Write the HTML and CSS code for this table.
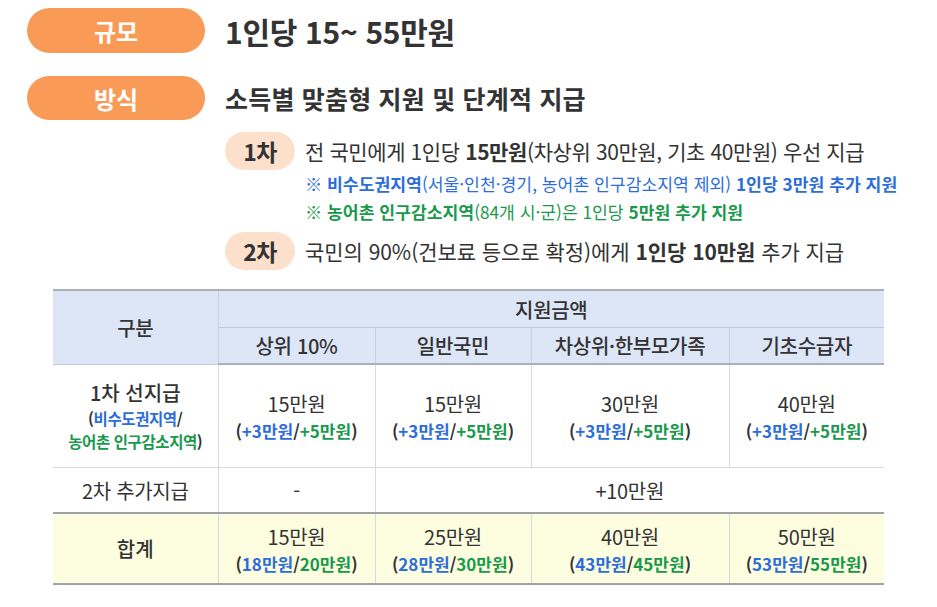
FILE: index.html
```html
<!DOCTYPE html>
<html lang="ko">
<head>
<meta charset="utf-8">
<link rel="stylesheet" href="styles.css">
</head>
<body>
<div class="page">
  <div class="row">
    <div class="pill">규모</div>
    <div class="head1">1인당 15~ 55만원</div>
  </div>
  <div class="row row2">
    <div class="pill">방식</div>
    <div class="head2">소득별 맞춤형 지원 및 단계적 지급</div>
  </div>
  <div class="items">
    <div class="item">
      <div class="badge">1차</div>
      <div class="itext">전 국민에게 1인당 <b>15만원</b>(차상위 30만원, 기초 40만원) 우선 지급</div>
    </div>
    <div class="note blue"><b>※ 비수도권지역</b>(서울·인천·경기, 농어촌 인구감소지역 제외) <b>1인당 3만원 추가 지원</b></div>
    <div class="note green"><b>※ 농어촌 인구감소지역</b>(84개 시·군)은 1인당 <b>5만원 추가 지원</b></div>
    <div class="item item2">
      <div class="badge">2차</div>
      <div class="itext itext2">국민의 90%(건보료 등으로 확정)에게 <b>1인당 10만원</b> 추가 지급</div>
    </div>
  </div>
  <table class="tbl">
    <colgroup>
      <col class="c1"><col class="c2"><col class="c3"><col class="c4"><col class="c5">
    </colgroup>
    <thead>
      <tr class="h1">
        <th rowspan="2" class="first">구분</th>
        <th colspan="4">지원금액</th>
      </tr>
      <tr class="h2">
        <th>상위 10%</th>
        <th>일반국민</th>
        <th>차상위·한부모가족</th>
        <th>기초수급자</th>
      </tr>
    </thead>
    <tbody>
      <tr class="r1">
        <td class="first">
          <div class="lbl">1차 선지급</div>
          <div class="sublbl">(<span class="b">비수도권지역</span>/</div>
          <div class="sublbl"><span class="g">농어촌 인구감소지역</span>)</div>
        </td>
        <td><div class="amt">15만원</div><div class="sub">(<span class="b">+3만원</span>/<span class="g">+5만원</span>)</div></td>
        <td><div class="amt">15만원</div><div class="sub">(<span class="b">+3만원</span>/<span class="g">+5만원</span>)</div></td>
        <td><div class="amt">30만원</div><div class="sub">(<span class="b">+3만원</span>/<span class="g">+5만원</span>)</div></td>
        <td><div class="amt">40만원</div><div class="sub">(<span class="b">+3만원</span>/<span class="g">+5만원</span>)</div></td>
      </tr>
      <tr class="r2">
        <td class="first plain">2차 추가지급</td>
        <td class="plain">-</td>
        <td colspan="3" class="plain">+10만원</td>
      </tr>
      <tr class="r3">
        <td class="first"><div class="lbl">합계</div></td>
        <td><div class="amt">15만원</div><div class="sub">(<span class="b">18만원</span>/<span class="g">20만원</span>)</div></td>
        <td><div class="amt">25만원</div><div class="sub">(<span class="b">28만원</span>/<span class="g">30만원</span>)</div></td>
        <td><div class="amt">40만원</div><div class="sub">(<span class="b">43만원</span>/<span class="g">45만원</span>)</div></td>
        <td><div class="amt">50만원</div><div class="sub">(<span class="b">53만원</span>/<span class="g">55만원</span>)</div></td>
      </tr>
    </tbody>
  </table>
</div>
</body>
</html>
```
FILE: styles.css
```css
html, body {
  margin: 0;
  padding: 0;
  background: #ffffff;
}
body {
  font-family: "Noto Sans CJK KR", "Noto Sans", sans-serif;
  color: #333333;
}
.page {
  padding: 8px 0 0 27px;
}
.row {
  display: flex;
  align-items: center;
  gap: 20px;
  height: 45px;
}
.row2 {
  margin-top: 23px;
  height: 44px;
}
.pill {
  width: 178px;
  height: 100%;
  border-radius: 23px;
  background: #f99b57;
  color: #ffffff;
  font-weight: 700;
  font-size: 24px;
  display: flex;
  align-items: center;
  justify-content: center;
}
.head1 {
  font-size: 30px;
  font-weight: 700;
  letter-spacing: -0.3px;
  color: #333333;
}
.head2 {
  font-size: 25px;
  font-weight: 700;
  letter-spacing: 0.2px;
  color: #333333;
}
.items {
  margin-top: 12px;
  margin-left: 198px;
}
.item {
  display: flex;
  align-items: center;
  gap: 10px;
  height: 38px;
}
.item2 {
  margin-top: 6px;
}
.badge {
  width: 70px;
  height: 38px;
  border-radius: 19px;
  background: #fde0cc;
  font-weight: 700;
  font-size: 23px;
  display: flex;
  align-items: center;
  justify-content: center;
  letter-spacing: -0.5px;
  color: #333333;
}
.itext {
  font-size: 21px;
  letter-spacing: -0.4px;
  color: #333333;
}
.itext2 {
  letter-spacing: -0.05px;
}
.itext b {
  font-weight: 700;
}
.note {
  margin-left: 80px;
  height: 28px;
  line-height: 28px;
  font-size: 17.2px;
  letter-spacing: 0;
}
.note b {
  font-weight: 700;
}
.blue { color: #2d6ddb; }
.green { color: #19994b; }
.tbl {
  margin-top: 19px;
  margin-left: 26px;
  width: 831px;
  border-collapse: collapse;
  table-layout: fixed;
  text-align: center;
  color: #333333;
}
.c1 { width: 165px; }
.c2 { width: 157px; }
.c3 { width: 156px; }
.c4 { width: 198px; }
.c5 { width: 155px; }
.tbl th {
  background: #dde6f7;
  font-weight: 500;
  font-size: 20px;
  letter-spacing: -0.3px;
  padding: 0;
  border-left: 1px solid #c8cfdb;
  border-right: 1px solid #c8cfdb;
}
.tbl th.first { border-left: none; }
.tbl thead tr.h1 th {
  height: 36px;
  border-top: 2px solid #a9b0ba;
  border-bottom: 1px solid #c2cad6;
}
.tbl thead tr.h1 th[colspan] { border-right: none; }
.tbl thead tr.h2 th {
  height: 35px;
  border-bottom: 2px solid #a9b0ba;
}
.tbl thead tr.h2 th:last-child { border-right: none; }
.tbl td {
  padding: 0;
  border-left: 1px solid #d6d9de;
  vertical-align: middle;
}
.tbl td.first { border-left: none; }
.r1 td {
  height: 102px;
  border-bottom: 1px solid #d6d9de;
}
.r2 td {
  height: 44px;
  border-bottom: 2px solid #9fa3a8;
}
.r3 td {
  height: 69px;
  background: #fdfde0;
  border-bottom: 2px solid #9fa3a8;
}
.plain {
  font-size: 20px;
  letter-spacing: -0.3px;
}
.lbl {
  font-size: 20px;
  font-weight: 500;
  letter-spacing: 0;
  line-height: 29px;
}
.sublbl {
  font-size: 15.5px;
  font-weight: 700;
  letter-spacing: -0.4px;
  line-height: 23px;
}
.amt {
  font-size: 20px;
  letter-spacing: -0.3px;
  line-height: 29px;
}
.sub {
  font-size: 17px;
  font-weight: 700;
  letter-spacing: 0;
  line-height: 25px;
}
.b { color: #2d6ddb; }
.g { color: #19994b; }
```
